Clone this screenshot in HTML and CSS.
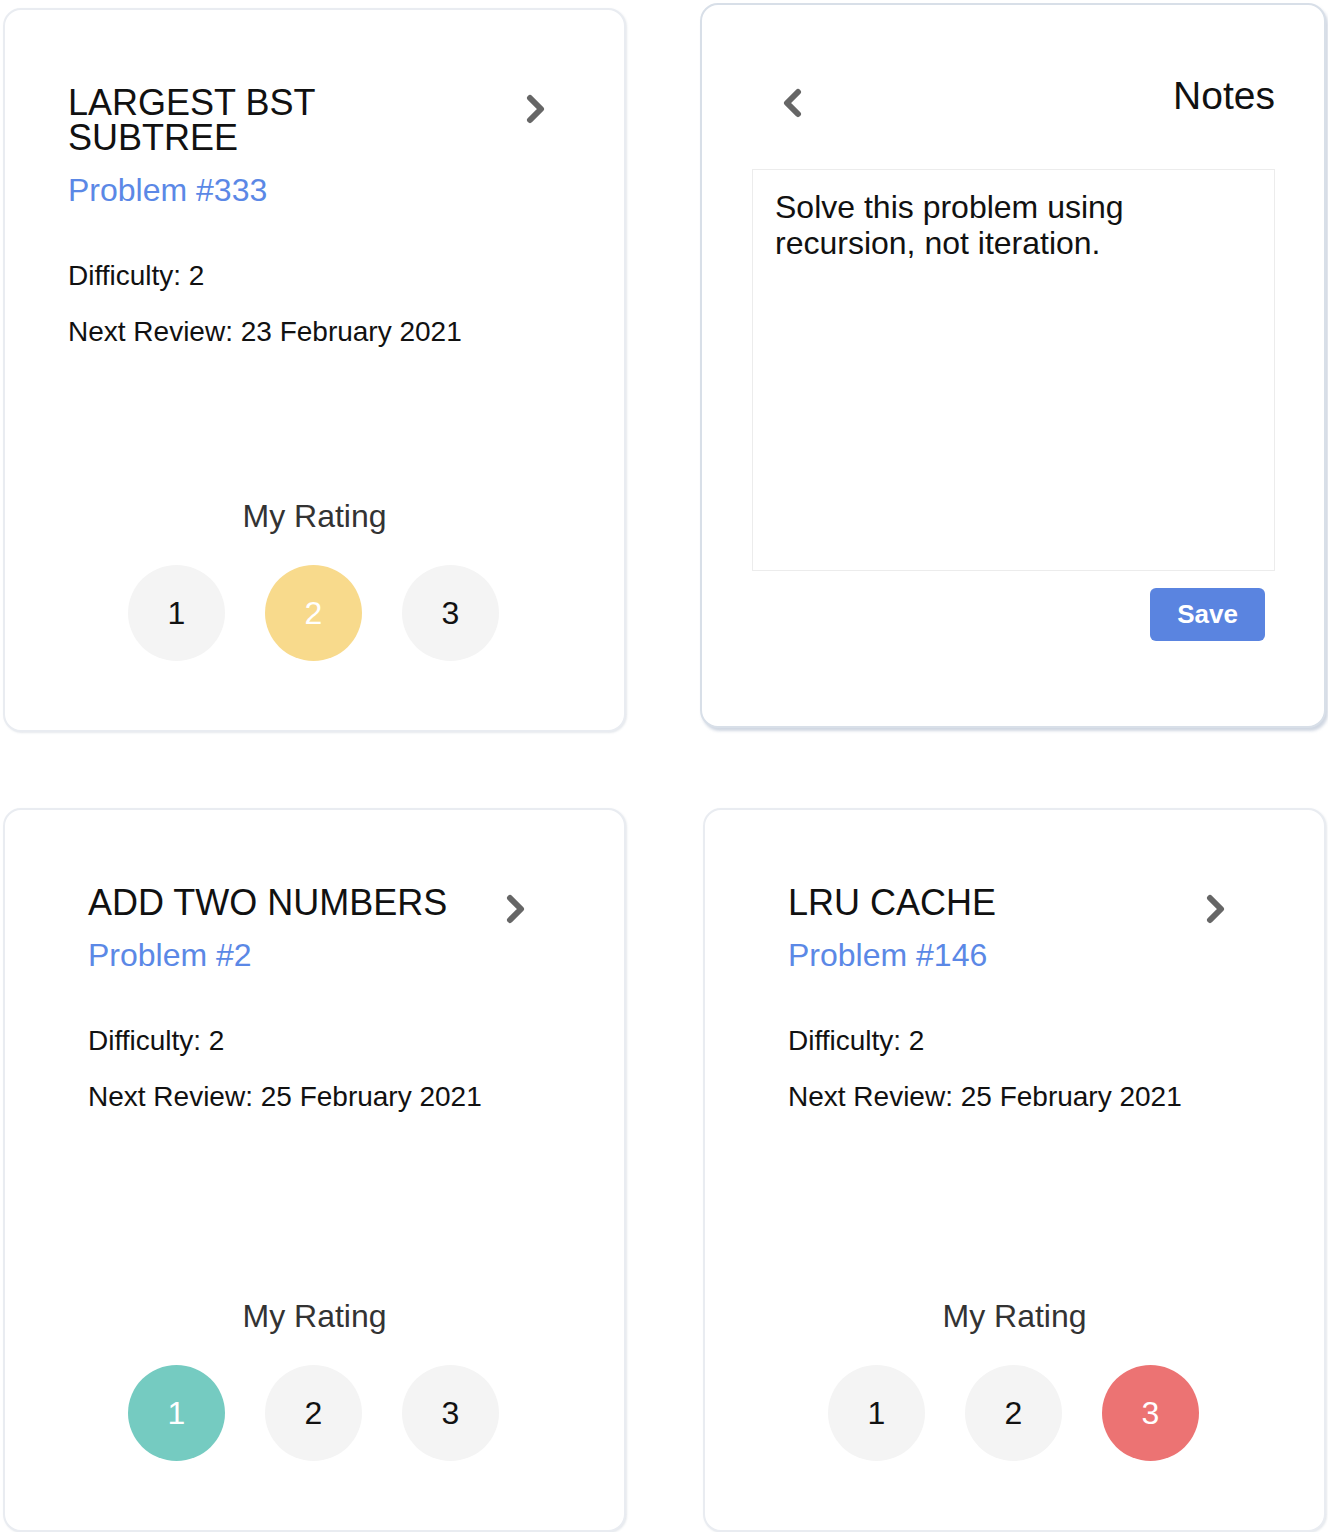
FILE: index.html
```html
<!DOCTYPE html>
<html lang="en">
<head>
<meta charset="utf-8">
<title>Review Cards</title>
<link rel="stylesheet" href="styles.css">
</head>
<body>
<main class="grid">
  <article class="card">
    <div class="card-main card-main--shift">
      <header class="card-header">
        <div class="card-heading">
          <h2 class="card-title">LARGEST BST SUBTREE</h2>
          <a class="card-problem" href="#">Problem #333</a>
        </div>
        <svg class="chevron" viewBox="0 0 20 32" width="20" height="32" aria-hidden="true"><polyline points="4,5 15,16 4,27"/></svg>
      </header>
      <p class="card-detail card-detail--first">Difficulty: 2</p>
      <p class="card-detail">Next Review: 23 February 2021</p>
    </div>
    <section class="rating">
      <h3 class="rating-label">My Rating</h3>
      <div class="rating-options">
        <span class="rating-dot">1</span>
        <span class="rating-dot rating-dot--yellow">2</span>
        <span class="rating-dot">3</span>
      </div>
    </section>
  </article>

  <article class="card card--notes">
    <header class="notes-header">
      <svg class="chevron chevron--back" viewBox="0 0 20 32" width="20" height="32" aria-hidden="true"><polyline points="16,5 5,16 16,27"/></svg>
      <h2 class="notes-title">Notes</h2>
    </header>
    <textarea class="notes-text">Solve this problem using recursion, not iteration.</textarea>
    <div class="notes-actions">
      <button class="save-btn" type="button">Save</button>
    </div>
  </article>

  <article class="card">
    <div class="card-main">
      <header class="card-header">
        <div class="card-heading">
          <h2 class="card-title">ADD TWO NUMBERS</h2>
          <a class="card-problem" href="#">Problem #2</a>
        </div>
        <svg class="chevron" viewBox="0 0 20 32" width="20" height="32" aria-hidden="true"><polyline points="4,5 15,16 4,27"/></svg>
      </header>
      <p class="card-detail card-detail--first">Difficulty: 2</p>
      <p class="card-detail">Next Review: 25 February 2021</p>
    </div>
    <section class="rating">
      <h3 class="rating-label">My Rating</h3>
      <div class="rating-options">
        <span class="rating-dot rating-dot--teal">1</span>
        <span class="rating-dot">2</span>
        <span class="rating-dot">3</span>
      </div>
    </section>
  </article>

  <article class="card">
    <div class="card-main">
      <header class="card-header">
        <div class="card-heading">
          <h2 class="card-title">LRU CACHE</h2>
          <a class="card-problem" href="#">Problem #146</a>
        </div>
        <svg class="chevron" viewBox="0 0 20 32" width="20" height="32" aria-hidden="true"><polyline points="4,5 15,16 4,27"/></svg>
      </header>
      <p class="card-detail card-detail--first">Difficulty: 2</p>
      <p class="card-detail">Next Review: 25 February 2021</p>
    </div>
    <section class="rating">
      <h3 class="rating-label">My Rating</h3>
      <div class="rating-options">
        <span class="rating-dot">1</span>
        <span class="rating-dot">2</span>
        <span class="rating-dot rating-dot--red">3</span>
      </div>
    </section>
  </article>
</main>
</body>
</html>
```

FILE: styles.css
```css
* { box-sizing: border-box; }

html, body {
  margin: 0;
  padding: 0;
  background: #ffffff;
}

body {
  font-family: "Liberation Sans", Arial, Helvetica, sans-serif;
  color: #111111;
}

.grid {
  display: grid;
  grid-template-columns: 623px 623px;
  grid-template-rows: 724px 724px;
  column-gap: 77px;
  row-gap: 76px;
  padding: 8px 0 0 3px;
}

.card {
  display: flex;
  flex-direction: column;
  background: #ffffff;
  border: 2px solid #e9ecf1;
  border-radius: 18px;
  box-shadow: 1px 1px 2px rgba(200, 206, 216, 0.45);
}

.card-main {
  padding: 75px 98px 0 83px;
}

.card-main--shift {
  padding-left: 63px;
  padding-right: 78px;
}

.card-header {
  display: flex;
  justify-content: space-between;
  align-items: flex-start;
}

.card-heading {
  max-width: 400px;
}

.card-title {
  margin: 0;
  font-size: 36px;
  line-height: 35px;
  font-weight: 400;
  color: #111111;
}

.card-problem {
  display: block;
  margin-top: 17px;
  font-size: 32px;
  line-height: 36px;
  color: #5b88e6;
  text-decoration: none;
}

.chevron {
  flex: none;
  margin-top: 8px;
  fill: none;
  stroke: #666666;
  stroke-width: 6;
  stroke-linecap: round;
  stroke-linejoin: round;
}

.card-detail {
  margin: 24px 0 0;
  font-size: 28px;
  line-height: 32px;
  color: #111111;
}

.card-detail--first {
  margin-top: 52px;
}

.rating {
  margin-top: auto;
  padding-bottom: 69px;
  text-align: center;
}

.rating-label {
  margin: 0;
  font-size: 32px;
  line-height: 36px;
  font-weight: 400;
  color: #333333;
}

.rating-options {
  display: flex;
  justify-content: center;
  gap: 40px;
  margin-top: 31px;
  padding-right: 2px;
}

.rating-dot {
  display: flex;
  align-items: center;
  justify-content: center;
  width: 97px;
  height: 96px;
  border-radius: 50%;
  background: #f4f4f4;
  font-size: 32px;
  color: #111111;
}

.rating-dot--yellow { background: #f8da8c; color: #ffffff; }
.rating-dot--teal { background: #75cbc1; color: #ffffff; }
.rating-dot--red { background: #ec7373; color: #ffffff; }

.card--notes {
  margin: -5px 0 4px -3px;
  padding: 69px 49px 0 50px;
  border-color: #d8dfe8;
  box-shadow: 2px 3px 3px rgba(170, 182, 202, 0.55);
}

.notes-header {
  display: flex;
  justify-content: space-between;
  align-items: flex-start;
}

.chevron--back {
  margin-top: 13px;
  margin-left: 30px;
}

.notes-title {
  margin: 0;
  font-size: 39px;
  line-height: 44px;
  font-weight: 400;
  color: #111111;
}

.notes-text {
  display: block;
  width: 100%;
  height: 402px;
  margin-top: 50px;
  padding: 19px 22px;
  border: 1px solid #ececec;
  border-radius: 0;
  font-family: "Liberation Sans", Arial, Helvetica, sans-serif;
  font-size: 32px;
  line-height: 36px;
  color: #111111;
  resize: none;
  outline: none;
  overflow: hidden;
}

.notes-actions {
  display: flex;
  justify-content: flex-end;
  padding-right: 10px;
  margin-top: 17px;
}

.save-btn {
  width: 115px;
  height: 53px;
  border: none;
  border-radius: 6px;
  background: #5a84e0;
  color: #ffffff;
  font-family: "Liberation Sans", Arial, Helvetica, sans-serif;
  font-size: 26px;
  font-weight: 700;
  cursor: pointer;
}
```
